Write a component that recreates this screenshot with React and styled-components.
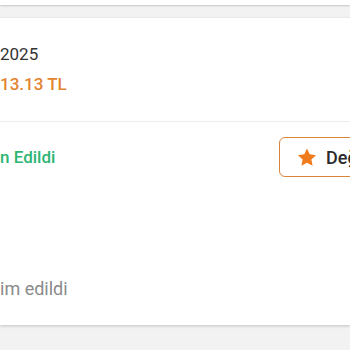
import React from 'react'
import styled, { createGlobalStyle } from 'styled-components'

const GlobalStyle = createGlobalStyle`
  html, body {
    margin: 0;
    padding: 0;
    background: #f2f2f2;
    overflow: hidden;
    font-family: Roboto, "Liberation Sans", sans-serif;
  }
`

const Page = styled.div`
  width: 350px;
  height: 350px;
  background: #f2f2f2;
  overflow: hidden;
`

const PrevCard = styled.div`
  height: 5px;
  background: #fff;
  box-shadow: 0 1px 2px rgba(0, 0, 0, 0.18);
`

const Card = styled.div`
  margin-top: 13px;
  height: 307px;
  background: #fff;
  box-shadow: 0 1px 3px rgba(0, 0, 0, 0.2);
  display: flex;
  flex-direction: column;
  overflow: hidden;
`

const Header = styled.div`
  display: flex;
  justify-content: space-between;
  align-items: center;
  padding: 25px 0 26px 0;
  border-bottom: 1px solid #ececec;
`

const Info = styled.div`
  display: flex;
  flex-direction: column;
  gap: 8px;
`

const DateText = styled.div`
  font-size: 17px;
  line-height: 22px;
  color: #333;
`

const Price = styled.div`
  font-size: 17px;
  line-height: 22px;
  font-weight: 500;
  color: #e3842f;
`

const DetailLink = styled.div`
  flex-shrink: 0;
  margin-right: -50px;
  font-size: 18px;
  font-weight: 700;
  color: #e3842f;
  white-space: nowrap;
`

const StatusRow = styled.div`
  display: flex;
  justify-content: space-between;
  align-items: center;
  padding-top: 15px;
`

const Status = styled.div`
  font-size: 17px;
  font-weight: 500;
  color: #2db573;
`

const RateButton = styled.button`
  flex-shrink: 0;
  display: flex;
  align-items: center;
  gap: 8px;
  height: 40px;
  padding: 0 16px 0 16px;
  margin-right: -86px;
  box-sizing: border-box;
  background: #fff;
  border: 1.5px solid #d9853b;
  border-radius: 6px;
  white-space: nowrap;
  font-family: Roboto, "Liberation Sans", sans-serif;
  font-size: 18px;
  font-weight: 500;
  color: #2b2b2b;

  svg {
    flex-shrink: 0;
  }
`

const Note = styled.div`
  margin-top: auto;
  padding-bottom: 26px;
  font-size: 18px;
  color: #8a8a8a;
`

const Star = () => (
  <svg width="22" height="21" viewBox="0 0 24 24">
    <path
      fill="#f07b1d"
      d="M12 1.8l3.1 6.6 7.2.9-5.3 5 1.4 7.1L12 17.9l-6.4 3.5 1.4-7.1-5.3-5 7.2-.9z"
    />
  </svg>
)

const App = () => (
  <Page>
    <GlobalStyle />
    <PrevCard />
    <Card>
      <Header>
        <Info>
          <DateText>2025</DateText>
          <Price>13.13 TL</Price>
        </Info>
        <DetailLink>Detay</DetailLink>
      </Header>
      <StatusRow>
        <Status>n Edildi</Status>
        <RateButton>
          <Star />
          <span>Değerlendir</span>
        </RateButton>
      </StatusRow>
      <Note>im edildi</Note>
    </Card>
  </Page>
)

export default App
